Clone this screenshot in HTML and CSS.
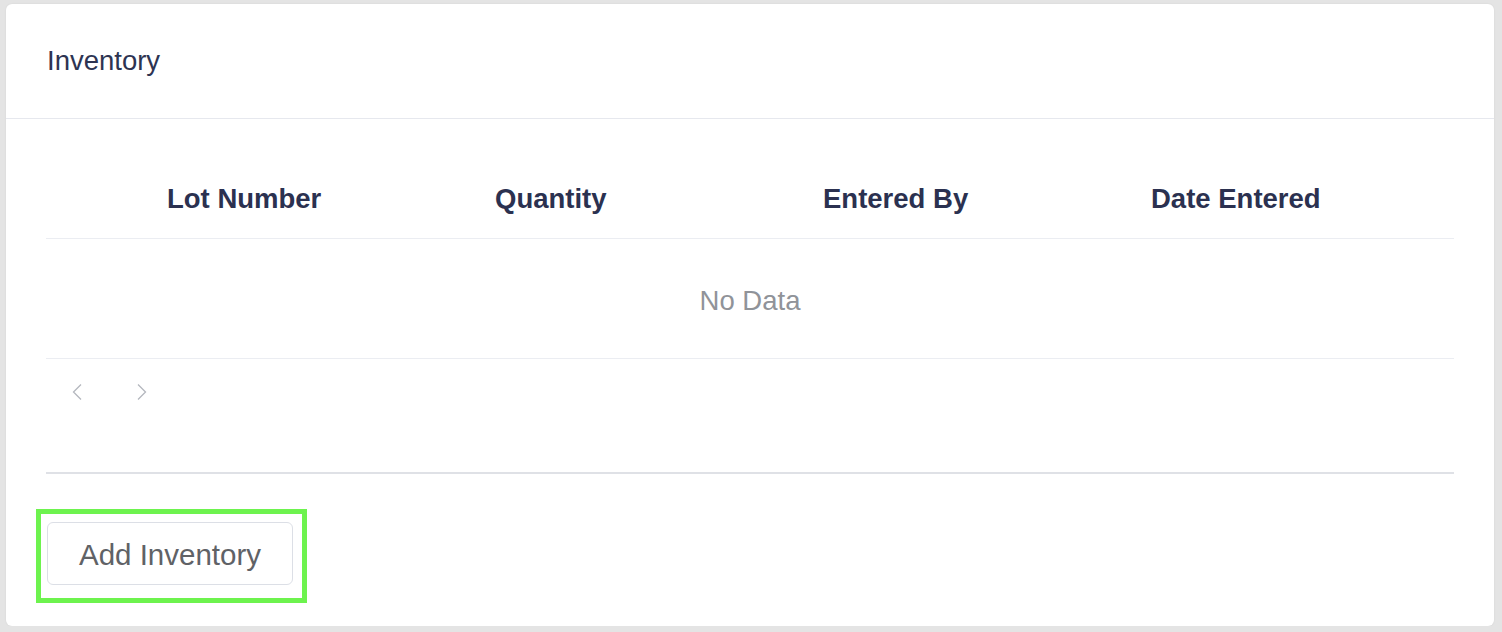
FILE: index.html
```html
<!DOCTYPE html>
<html lang="en">
<head>
<meta charset="utf-8">
<title>Inventory</title>
<link rel="stylesheet" href="styles.css">
</head>
<body>
<div class="card">
  <div class="card-header">Inventory</div>
  <div class="card-body">
    <div class="table">
      <div class="thead">
        <div class="th">Lot Number</div>
        <div class="th">Quantity</div>
        <div class="th">Entered By</div>
        <div class="th">Date Entered</div>
      </div>
      <div class="empty">No Data</div>
    </div>
    <div class="pager">
      <svg class="chev" width="12" height="18" viewBox="0 0 12 18"><path d="M10 1.5 L2.5 9 L10 16.5" fill="none" stroke="#b4b7be" stroke-width="1.3"/></svg>
      <svg class="chev" width="12" height="18" viewBox="0 0 12 18"><path d="M2 1.5 L9.5 9 L2 16.5" fill="none" stroke="#b4b7be" stroke-width="1.3"/></svg>
    </div>
    <div class="divider"></div>
    <div class="highlight">
      <button class="btn">Add Inventory</button>
    </div>
  </div>
</div>
</body>
</html>
```

FILE: styles.css
```css
html, body {
  margin: 0;
  padding: 0;
}
body {
  background: #e4e4e4;
  padding: 4px 8px 0 6px;
  font-family: "Liberation Sans", Arial, Helvetica, sans-serif;
}
.card {
  width: 1488px;
  box-sizing: border-box;
  background: #ffffff;
  border-radius: 6px;
  box-shadow: 0 0 2px rgba(0, 0, 0, 0.08);
  padding-bottom: 23px;
}
.card-header {
  box-sizing: border-box;
  height: 115px;
  padding: 43px 41px 0;
  font-size: 27.5px;
  line-height: 28px;
  color: #2d3452;
  border-bottom: 1px solid #e6e8ee;
}
.card-body {
  padding: 0 40px;
}
.thead {
  display: grid;
  grid-template-columns: repeat(4, 328px);
  padding: 66px 0 25px 121px;
  border-bottom: 1px solid #ebedf2;
}
.th {
  font-size: 27.5px;
  line-height: 28px;
  font-weight: bold;
  color: #2b3150;
}
.empty {
  padding: 48px 0 43px;
  text-align: center;
  font-size: 27.5px;
  line-height: 28px;
  color: #909399;
  border-bottom: 1px solid #ebedf2;
}
.pager {
  height: 113px;
  box-sizing: border-box;
  padding: 24px 0 0 25px;
  display: flex;
  gap: 53px;
  align-items: flex-start;
}
.chev {
  display: block;
}
.divider {
  height: 2px;
  background: #dfe1e6;
}
.highlight {
  display: inline-block;
  margin: 35px 0 0 -10px;
  border: 5px solid #6df34e;
  padding: 8px 9px 13px 6px;
}
.btn {
  display: block;
  width: 246px;
  height: 63px;
  box-sizing: border-box;
  background: #ffffff;
  border: 1px solid #dcdfe6;
  border-radius: 6px;
  font-family: "Liberation Sans", Arial, Helvetica, sans-serif;
  font-size: 29.5px;
  color: #606266;
  padding: 3px 0 0;
  cursor: pointer;
}
```
